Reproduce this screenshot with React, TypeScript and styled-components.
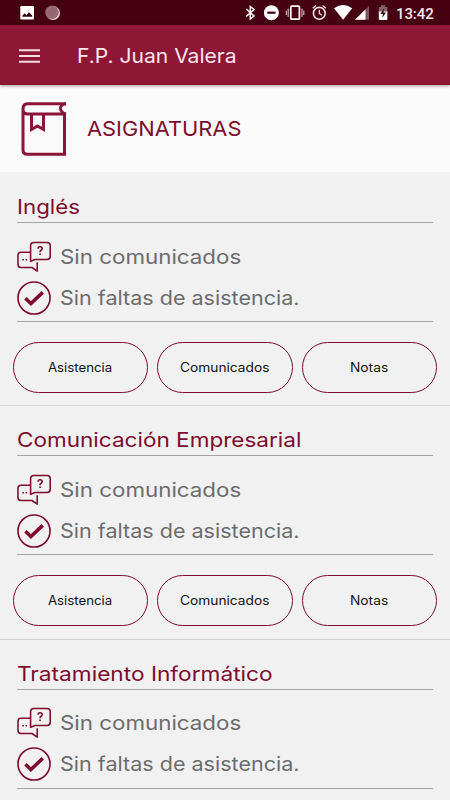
import React, { useLayoutEffect, useRef } from "react";
import styled, { createGlobalStyle } from "styled-components";

const GlobalStyle = createGlobalStyle`
  *, *::before, *::after { box-sizing: border-box; }
  body { margin: 0; background: #f1f1f1; overflow: hidden; }
`;

const maroon = "#7d0c2e";

const Screen = styled.div`
  width: 450px;
  height: 800px;
  overflow: hidden;
  display: flex;
  flex-direction: column;
  background: #f1f1f1;
  font-family: Inter, "Open Sans", sans-serif;
`;

const StatusBar = styled.header`
  flex: none;
  height: 25px;
  background: #450012;
  display: flex;
  justify-content: space-between;
`;

const StatusIcons = styled.svg`
  display: block;
  flex: none;
`;

const StatusRight = styled.div`
  display: flex;
`;

const Clock = styled.time`
  width: 54px;
  padding-top: 1px;
  font: 500 15px/26px Roboto, sans-serif;
  letter-spacing: -0.1px;
  color: #f5e9ec;
`;

const AppBar = styled.nav`
  flex: none;
  height: 60px;
  display: flex;
  align-items: center;
  padding: 2px 0 0 19px;
  background: #8f1736;
  border-bottom: 1px solid #7c1430;
  box-shadow: 0 1px 3px rgba(60, 0, 15, 0.4);
  position: relative;
`;

const MenuButton = styled.button`
  width: 57.5px;
  height: 40px;
  padding: 0;
  border: 0;
  background: none;
  display: flex;
  align-items: center;
`;

const Heading = styled.div`
  flex: none;
  height: 88px;
  display: flex;
  align-items: center;
  padding: 1px 0 0 21px;
  gap: 20px;
  background: #fafafa;
  border-bottom: 1px solid #f3f3f3;
`;

const Text = styled.span<{ $size: number; $color: string; $width: number; $lineHeight: number }>`
  display: block;
  flex: none;
  width: ${(p) => p.$width}px;
  font-size: ${(p) => p.$size}px;
  line-height: ${(p) => p.$lineHeight}px;
  font-weight: 400;
  text-align: left;
  color: ${(p) => p.$color};
  white-space: nowrap;
`;

const Glyphs = styled.span`
  display: inline-block;
  vertical-align: top;
  transform-origin: 0 50%;
`;

type FitProps = { children: string; size: number; color: string; width: number; lineHeight?: number };

/* Widens the lettering so that it fills the given width. */
function FitText({ children, size, color, width, lineHeight = 28 }: FitProps) {
  const ref = useRef<HTMLSpanElement>(null);
  useLayoutEffect(() => {
    const el = ref.current;
    if (el) el.style.transform = `scaleX(${width / el.offsetWidth})`;
  }, [children, width]);
  return (
    <Text $size={size} $color={color} $width={width} $lineHeight={lineHeight}>
      <Glyphs ref={ref}>{children}</Glyphs>
    </Text>
  );
}

const Section = styled.section`
  flex: none;
  height: 233.4px;
  border-bottom: 1px solid #d2d2d2;

  &:last-of-type { border-bottom: 0; }
`;

const Title = styled.div`
  height: 50px;
  margin: 0 17px;
  padding-top: 20px;
  border-bottom: 1px solid #a5a5a5;
`;

const Facts = styled.div`
  height: 99px;
  margin: 0 17px;
  padding-top: 13px;
  border-bottom: 1px solid #a5a5a5;
`;

const Fact = styled.div`
  height: 41px;
  display: flex;
  align-items: center;
  gap: 8.5px;
`;

const Actions = styled.div`
  display: grid;
  grid-template-columns: repeat(3, 1fr);
  gap: 9px;
  padding: 19.5px 13px 0 12.5px;
`;

const Pill = styled.button`
  height: 51px;
  padding: 1px 0 0;
  border: 1px solid ${maroon};
  border-radius: 26px;
  background: transparent;
  font-family: inherit;
  display: flex;
  align-items: center;
  justify-content: center;
`;

const Icon = styled.svg`
  display: block;
  flex: none;
`;

function BookIcon() {
  return (
    <Icon width="46" height="54" viewBox="0 0 46 54" fill="none" stroke="#8b1538" strokeWidth="3">
      <path d="M45 1.7H6.5Q2 1.7 2 7V48Q2 52.3 6.5 52.3H43.5V12H7Q2 12 2 7.5" />
      <path d="M45 1.7Q38.5 3 39.5 7Q40 10.5 45 12" strokeWidth="2.8" />
      <path d="M10.5 12V27.5L16.5 24L22.5 27.5V12" />
    </Icon>
  );
}

function ChatIcon() {
  return (
    <Icon width="34" height="32" viewBox="0 0 35 32" fill="none" stroke={maroon} strokeWidth="1.6" strokeLinejoin="round">
      <path d="M13.5 11.2H4Q1 11.2 1 14.5V23.5Q1 26.8 4 26.8H15.5L20.8 30.5V21.5" />
      <path d="M14 20.5V4.2Q14 1 17.2 1H31Q34.2 1 34.2 4.2V15.2Q34.2 18.5 31 18.5H18.5Z" />
      <path d="M21.6 7.3Q21.8 5.4 23.7 5.4Q25.9 5.4 25.9 7.2Q25.9 8.5 24.5 9.2Q23.7 9.7 23.7 11.2" strokeWidth="1.7" />
      <path d="M22.9 13.2H24.6M5.5 18.8H7.1M8.8 18.8H10.4" strokeWidth="1.6" />
    </Icon>
  );
}

function CheckIcon() {
  return (
    <Icon width="34" height="34" viewBox="0 0 35 35" fill="none" stroke={maroon}>
      <circle cx="17.5" cy="17.5" r="16.5" strokeWidth="1.7" />
      <path d="M8.7 17.8L14.3 23.2L26.5 11.7" strokeWidth="3.6" />
    </Icon>
  );
}

function NotificationIcons() {
  return (
    <StatusIcons width="70" height="25" viewBox="0 0 70 25">
      <rect x="20.3" y="6" width="13.7" height="13.5" rx="1.3" fill="#fff" />
      <path d="M22.4 16.8V15.5L24.8 13.2L26.3 15.2L29 12.2L32.2 15.5V16.8Z" fill="#30040f" />
      <circle cx="53" cy="13" r="7" fill="#ead5d7" />
      <circle cx="52" cy="12.2" r="6.7" fill="#946672" />
      <circle cx="52" cy="12.2" r="5" fill="none" stroke="#aa7e87" strokeWidth="0.7" strokeDasharray="2 1" />
    </StatusIcons>
  );
}

function SystemIcons() {
  return (
    <StatusIcons width="151" height="25" viewBox="0 0 151 25" fill="none" stroke="#fff">
      <path d="M1.2 9L9 16L5.3 19V6.5L9 9.5L1.2 16.5" strokeWidth="1.5" />
      <circle cx="26.4" cy="12.7" r="7.5" fill="#fff" stroke="none" />
      <path d="M22.3 12.7H30.5" stroke="#450012" strokeWidth="2.2" />
      <rect x="45.8" y="6.2" width="8.6" height="13" rx="1" strokeWidth="1.7" />
      <path d="M43.2 8.5V17M57 8.5V17M41.3 10.5V15M58.8 10.5V15" strokeWidth="1.2" stroke="#cbb0b7" />
      <circle cx="74.3" cy="13.3" r="5.9" strokeWidth="1.6" stroke="#f0e2e5" />
      <path d="M74.3 9.8V13.5L77 15.3M67.7 8.3L71 5.6M80.9 8.3L77.6 5.6" strokeWidth="1.3" stroke="#f0e2e5" />
      <path d="M89 8.3Q98 1.8 107.2 8.3L98.1 19.8Z" fill="#fff" stroke="none" />
      <path d="M124 6V19.8H110Z" fill="#80545f" stroke="none" />
      <path d="M120.5 9.5V19.8H110Z" fill="#fff" stroke="none" />
      <path d="M133.8 7H136V5.3H140.2V7H142.4V13H133.8Z" fill="#856069" stroke="none" />
      <path d="M133.8 11.5H142.4V19Q142.4 20 141.4 20H134.8Q133.8 20 133.8 19Z" fill="#fff" stroke="none" />
      <path d="M139.2 8L135.3 14H138L137.1 18L141 12.5H138.4Z" fill="#450012" stroke="none" />
    </StatusIcons>
  );
}

const actions = [
  { label: "Asistencia", width: 64.5 },
  { label: "Comunicados", width: 89 },
  { label: "Notas", width: 38.5 },
];

const subjects = [
  { name: "Inglés", width: 63.5, actions },
  { name: "Comunicación Empresarial", width: 284, actions },
  { name: "Tratamiento Informático", width: 256, actions: [] },
];

export default function App() {
  return (
    <Screen>
      <GlobalStyle />
      <StatusBar>
        <NotificationIcons />
        <StatusRight>
          <SystemIcons />
          <Clock>13:42</Clock>
        </StatusRight>
      </StatusBar>
      <AppBar>
        <MenuButton aria-label="Menú">
          <Icon width="21" height="14" viewBox="0 0 21 14" stroke="#f7dce4" strokeWidth="2">
            <path d="M0 1.2H21M0 7H21M0 12.8H21" />
          </Icon>
        </MenuButton>
        <FitText size={20} color="#fbe6ec" width={160}>F.P. Juan Valera</FitText>
      </AppBar>
      <Heading>
        <BookIcon />
        <FitText size={20} color={maroon} width={154}>ASIGNATURAS</FitText>
      </Heading>
      {subjects.map((s) => (
        <Section key={s.name}>
          <Title>
            <FitText size={20} color={maroon} width={s.width}>{s.name}</FitText>
          </Title>
          <Facts>
            <Fact>
              <ChatIcon />
              <FitText size={20} color="#6c6c6c" width={181}>Sin comunicados</FitText>
            </Fact>
            <Fact>
              <CheckIcon />
              <FitText size={20} color="#6c6c6c" width={239}>Sin faltas de asistencia.</FitText>
            </Fact>
          </Facts>
          {s.actions.length > 0 && (
            <Actions>
              {s.actions.map((a) => (
                <Pill key={a.label}>
                  <FitText size={12.5} lineHeight={20} color="#111111" width={a.width}>{a.label}</FitText>
                </Pill>
              ))}
            </Actions>
          )}
        </Section>
      ))}
    </Screen>
  );
}
